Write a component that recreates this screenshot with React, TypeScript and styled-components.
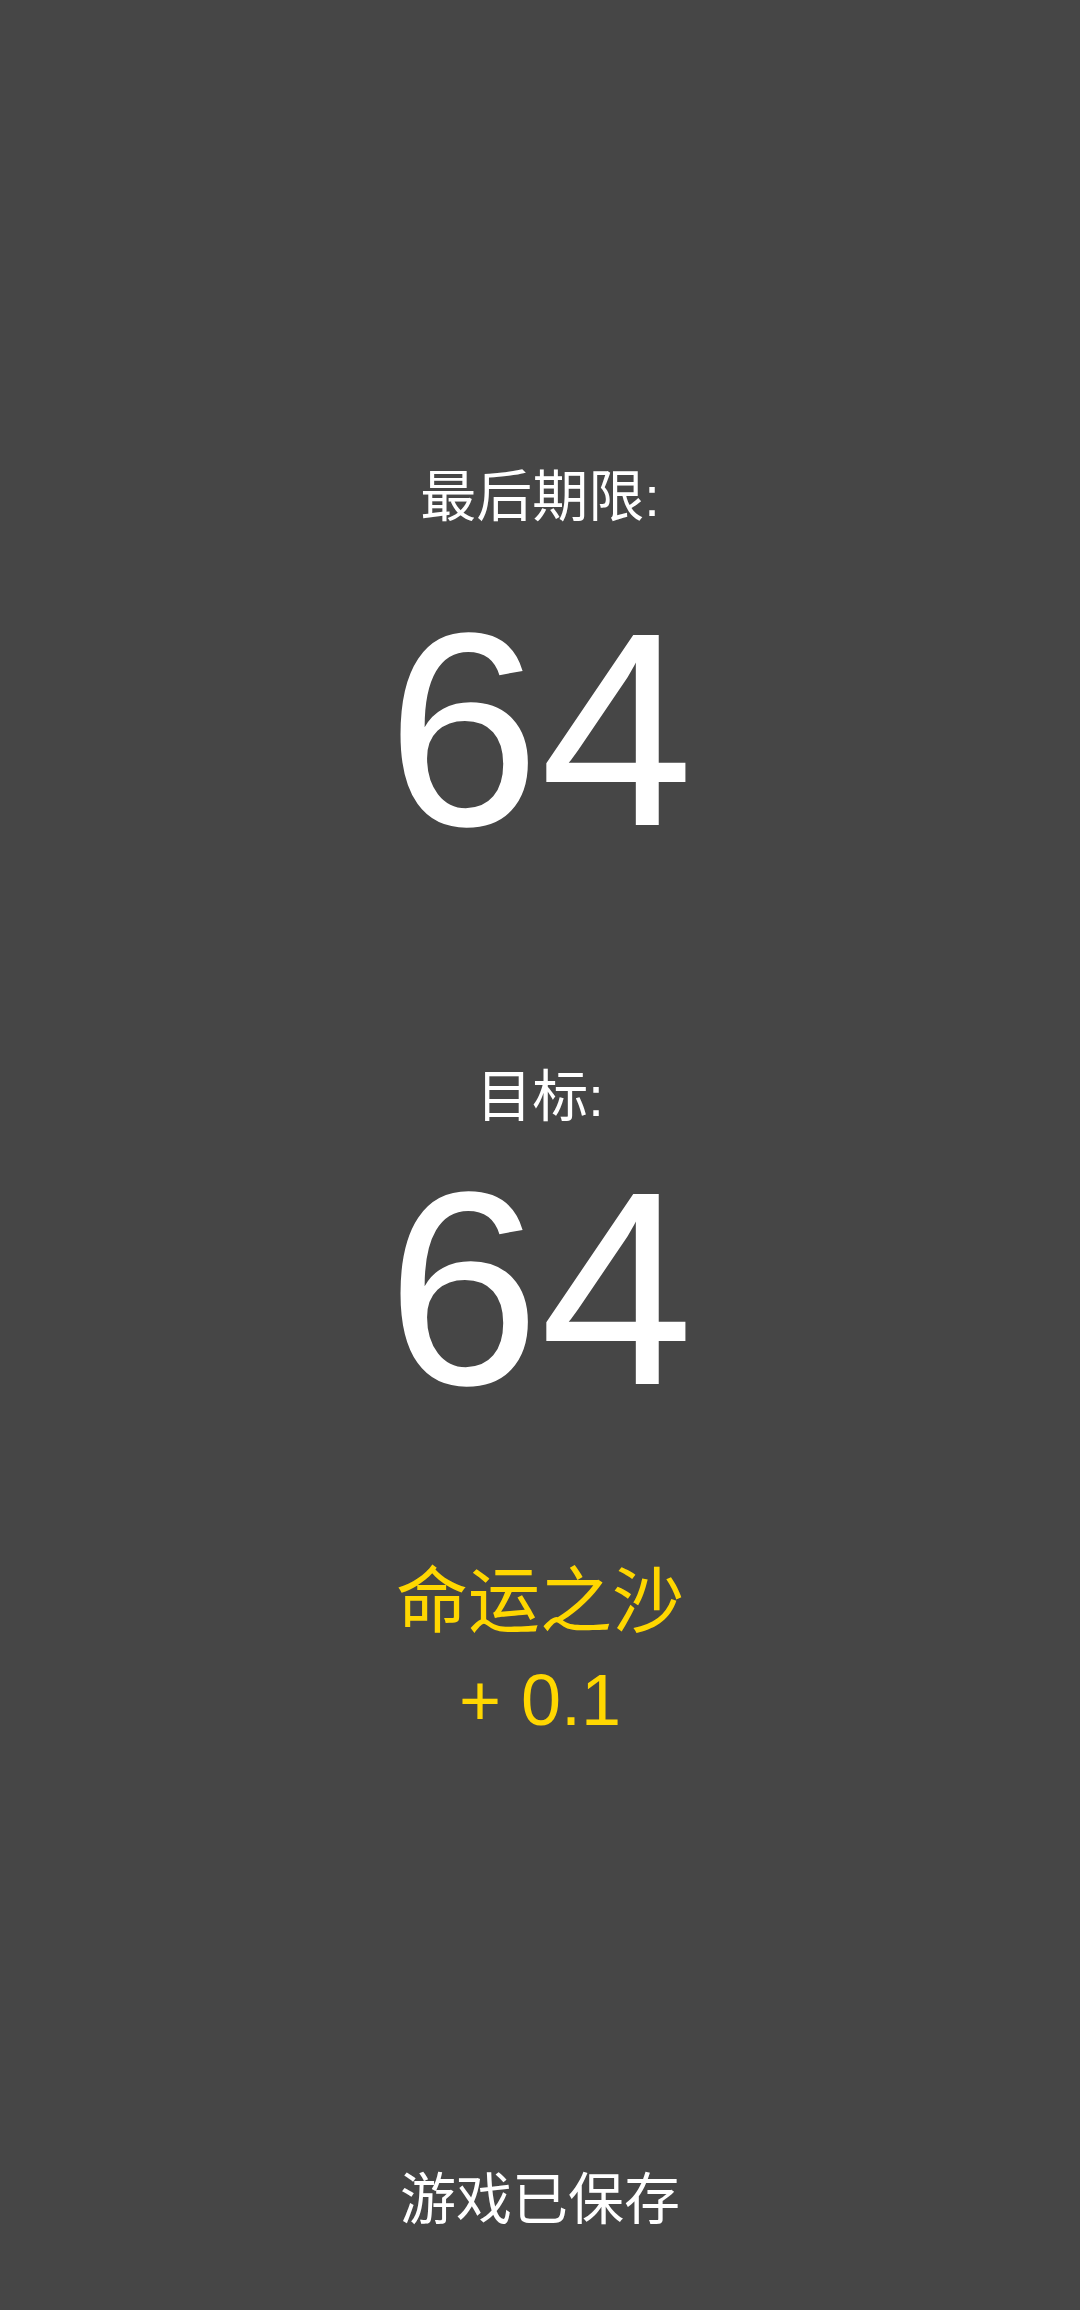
import React from "react";
import styled, { createGlobalStyle } from "styled-components";

const GlobalStyle = createGlobalStyle`
  html, body {
    margin: 0;
    padding: 0;
    background: #464646;
  }
  body {
    font-family: "Liberation Sans", "Noto Sans CJK SC", sans-serif;
  }
`;

const App = () => {
  return (
    <>
      <GlobalStyle />
      <Screen>
        <Label>最后期限:</Label>
        <BigNumber $gap={66}>64</BigNumber>
        <Label $gap={202}>目标:</Label>
        <BigNumber $gap={25}>64</BigNumber>
        <Bonus>
          <BonusLine>命运之沙</BonusLine>
          <BonusLine>+ 0.1</BonusLine>
        </Bonus>
        <SavedNote>游戏已保存</SavedNote>
      </Screen>
    </>
  );
};

export default App;

const Screen = styled.div`
  width: 1080px;
  height: 2310px;
  box-sizing: border-box;
  padding: 469px 0 82px;
  display: flex;
  flex-direction: column;
  align-items: center;
  background: #464646;
  color: #ffffff;
`;

const Label = styled.div<{ $gap?: number }>`
  margin-top: ${({ $gap }) => $gap ?? 0}px;
  font-size: 56px;
  line-height: 56px;
  font-weight: 400;
  text-align: center;
`;

const BigNumber = styled.div<{ $gap?: number }>`
  margin-top: ${({ $gap }) => $gap ?? 0}px;
  font-size: 276px;
  line-height: 276px;
  font-weight: 400;
  text-align: center;
`;

const Bonus = styled.div`
  margin-top: 126px;
  display: flex;
  flex-direction: column;
  align-items: center;
  color: #ffd700;
`;

const BonusLine = styled.div`
  font-size: 72px;
  line-height: 99px;
  text-align: center;
`;

const SavedNote = styled.div`
  margin-top: auto;
  font-size: 56px;
  line-height: 56px;
  text-align: center;
`;
